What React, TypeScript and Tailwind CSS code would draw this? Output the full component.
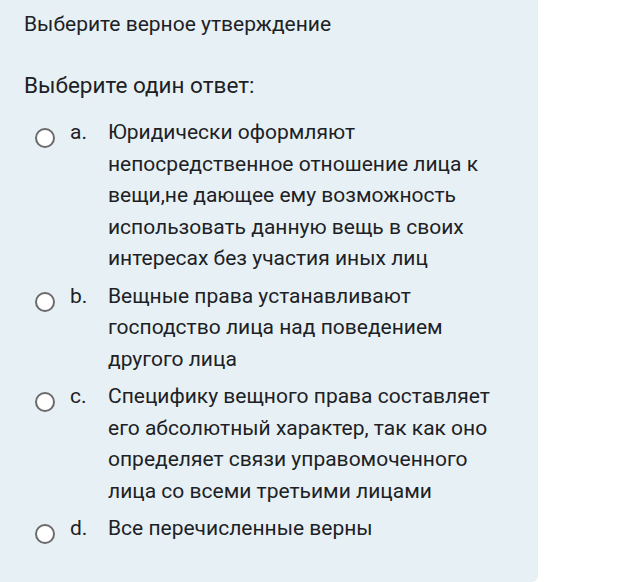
import React from 'react';

type Option = { key: string; lines: string[] };

const options: Option[] = [
  {
    key: 'a.',
    lines: [
      'Юридически оформляют',
      'непосредственное отношение лица к',
      'вещи,не дающее ему возможность',
      'использовать данную вещь в своих',
      'интересах без участия иных лиц',
    ],
  },
  {
    key: 'b.',
    lines: ['Вещные права устанавливают', 'господство лица над поведением', 'другого лица'],
  },
  {
    key: 'c.',
    lines: [
      'Специфику вещного права составляет',
      'его абсолютный характер, так как оно',
      'определяет связи управомоченного',
      'лица со всеми третьими лицами',
    ],
  },
  {
    key: 'd.',
    lines: ['Все перечисленные верны'],
  },
];

export default function App() {
  return (
    <div className="w-[622px] h-[582px] bg-white flex font-['Roboto',sans-serif] text-[#1d2125]">
      <div className="w-[538px] h-full bg-[#e7f1f5] rounded-br-md pl-6 pt-[10px]">
        {/* Вопрос */}
        <div className="text-[21px] leading-[28px]">Выберите верное утверждение</div>
        <div className="mt-[33px] text-[22.5px] leading-[28px]">Выберите один ответ:</div>

        {/* Варианты */}
        <div className="mt-[18px] flex flex-col gap-[6px]">
          {options.map((o) => (
            <label key={o.key} className="flex items-start">
              <span className="ml-[11px] mt-[11px] w-[20px] h-[20px] shrink-0 rounded-full border-[2.5px] border-[#6a6a6a] bg-white" />
              <span className="ml-[15px] w-[38px] shrink-0 text-[21px] leading-[31.5px]">{o.key}</span>
              <span className="text-[21px] leading-[31.5px]">
                {o.lines.map((l) => (
                  <span key={l} className="block whitespace-nowrap">
                    {l}
                  </span>
                ))}
              </span>
            </label>
          ))}
        </div>
      </div>
    </div>
  );
}
